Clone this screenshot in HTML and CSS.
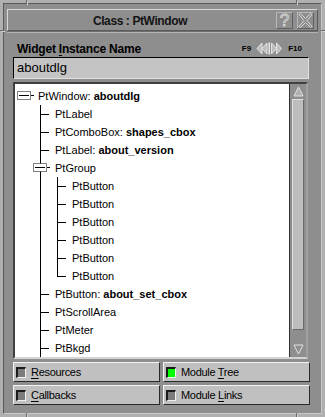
FILE: index.html
```html
<!DOCTYPE html>
<html>
  <head>
    <meta charset="utf-8">
    <title>Class : PtWindow</title>
    <link rel="stylesheet" href="styles.css">
  </head>
  <body>
    <div class="window">
      <span class="mark mark_top_l"></span>
      <span class="mark mark_top_r"></span>
      <span class="mark mark_side_l"></span>
      <span class="mark mark_side_r"></span>
      <span class="mark mark_bot_l"></span>
      <span class="mark mark_bot_r"></span>

      <div class="shell">
        <div class="titlebar">
          <div class="title">Class : PtWindow</div>
          <div class="tbtn">?</div>
          <div class="tbtn">
            <svg width="15" height="15" viewBox="0 0 15 15">
              <path d="M1 1.5 L2.5 0.5 L7.5 5.5 L12.5 0.5 L14 1.5 L9 7.5 L14 13.5 L12.5 14.5 L7.5 9.5 L2.5 14.5 L1 13.5 L6 7.5 Z" fill="none" stroke="#d6d6d6" stroke-width="1"/>
            </svg>
          </div>
        </div>

        <div class="pane">
          <div class="name_row">
            <h3>Widget <u>I</u>nstance Name</h3>
            <div class="nav">
              <span>F9</span>
              <svg width="27" height="13" viewBox="0 0 27 13">
                <path d="M1 6.5 L6 1 L6 12 Z M6 6.5 L11 1 L11 12 Z" fill="#bdbdbd" stroke="#e4e4e4" stroke-width="1"/>
                <rect x="12.5" y="0.5" width="1.5" height="12" fill="#e8e8e8"/>
                <path d="M15.5 1 L20.5 6.5 L15.5 12 Z M20.5 1 L25.5 6.5 L20.5 12 Z" fill="#bdbdbd" stroke="#e4e4e4" stroke-width="1"/>
              </svg>
              <span>F10</span>
            </div>
          </div>

          <div class="name_field">aboutdlg</div>

          <div class="tree_box">
            <div class="tree">
              <div class="node root">
                <span class="ico">
                  <svg width="21" height="18" viewBox="0 0 21 18">
                    <rect x="0.5" y="4.5" width="13" height="8" fill="#fff" stroke="#000" stroke-dasharray="1 1"/>
                    <rect x="2" y="8" width="10" height="1" fill="#000"/>
                    <rect x="14" y="8" width="3" height="1" fill="#000"/>
                  </svg>
                </span>
                <span class="txt">PtWindow: <b>aboutdlg</b></span>
              </div>
              <div class="node"><span class="tee"></span><span class="txt">PtLabel</span></div>
              <div class="node"><span class="tee"></span><span class="txt">PtComboBox: <b>shapes_cbox</b></span></div>
              <div class="node"><span class="tee"></span><span class="txt">PtLabel: <b>about_version</b></span></div>
              <div class="node">
                <span class="tee grp">
                  <svg width="23" height="18" viewBox="0 0 23 18">
                    <rect x="1.5" y="4.5" width="13" height="8" fill="#fff" stroke="#000" stroke-dasharray="1 1"/>
                    <rect x="3" y="8" width="10" height="1" fill="#000"/>
                    <rect x="15" y="8" width="3" height="1" fill="#000"/>
                  </svg>
                </span>
                <span class="txt">PtGroup</span>
              </div>
              <div class="node"><span class="rail"></span><span class="tee"></span><span class="txt">PtButton</span></div>
              <div class="node"><span class="rail"></span><span class="tee"></span><span class="txt">PtButton</span></div>
              <div class="node"><span class="rail"></span><span class="tee"></span><span class="txt">PtButton</span></div>
              <div class="node"><span class="rail"></span><span class="tee"></span><span class="txt">PtButton</span></div>
              <div class="node"><span class="rail"></span><span class="tee"></span><span class="txt">PtButton</span></div>
              <div class="node"><span class="rail"></span><span class="tee last"></span><span class="txt">PtButton</span></div>
              <div class="node"><span class="tee"></span><span class="txt">PtButton: <b>about_set_cbox</b></span></div>
              <div class="node"><span class="tee"></span><span class="txt">PtScrollArea</span></div>
              <div class="node"><span class="tee"></span><span class="txt">PtMeter</span></div>
              <div class="node"><span class="tee"></span><span class="txt">PtBkgd</span></div>
            </div>

            <div class="scrollbar">
              <div class="arrow">
                <svg width="11" height="11" viewBox="0 0 11 11"><path d="M5.5 1 L10 10 L1 10 Z" fill="#b0b0b0" stroke="#e2e2e2"/></svg>
              </div>
              <div class="thumb"></div>
              <div class="trough"></div>
              <div class="arrow">
                <svg width="11" height="11" viewBox="0 0 11 11"><path d="M1 1 L10 1 L5.5 10 Z" fill="#8e8e8e" stroke="#e2e2e2"/></svg>
              </div>
            </div>
          </div>

          <div class="toggles">
            <div class="toggle"><span class="led"></span><span><u>R</u>esources</span></div>
            <div class="toggle"><span class="led on"></span><span>Module <u>T</u>ree</span></div>
            <div class="toggle"><span class="led"></span><span><u>C</u>allbacks</span></div>
            <div class="toggle"><span class="led"></span><span>Module <u>L</u>inks</span></div>
          </div>
        </div>
      </div>
    </div>
  </body>
</html>
```

FILE: styles.css
```css
/* window colours */
:root {
  --face: #8e8e8e;
  --frame: #b0b0b0;
  --light: #d8d8d8;
  --dark: #5a5a5a;
  --button: #c0c0c0;
}

body {
  margin: 0;
  background-color: var(--face);
  font-family: "Liberation Sans", Arial, sans-serif;
  color: #000;
}

.window {
  position: relative;
  width: 325px;
  height: 417px;
  box-sizing: border-box;
  border: 3px solid var(--frame);
}

/* resize grips cut into the frame */
.mark {
  position: absolute;
  background-color: #6a6a6a;
  box-shadow: 1px 1px 0 #d0d0d0;
}
.mark_top_l { top: -3px; left: 23px; width: 1px; height: 4px; }
.mark_top_r { top: -3px; left: 293px; width: 1px; height: 4px; }
.mark_bot_l { bottom: -3px; left: 23px; width: 1px; height: 4px; }
.mark_bot_r { bottom: -3px; left: 293px; width: 1px; height: 4px; }
.mark_side_l { top: 27px; left: -3px; width: 4px; height: 1px; }
.mark_side_r { top: 27px; right: -3px; width: 4px; height: 1px; }

.shell {
  height: 100%;
  box-sizing: border-box;
  border: 1px solid var(--dark);
  border-right-color: #c8c8c8;
  border-bottom-color: #c8c8c8;
  padding: 5px 3px 3px;
  display: flex;
  flex-direction: column;
}

.titlebar {
  height: 22px;
  box-sizing: border-box;
  border: 1px solid var(--light);
  border-right-color: var(--dark);
  border-bottom-color: var(--dark);
  display: flex;
  align-items: center;
  padding-right: 3px;
}

.title {
  flex: 1;
  text-align: center;
  font-weight: bold;
  font-size: 12px;
  letter-spacing: -0.4px;
  color: #141414;
  padding-top: 1px;
}

.tbtn {
  width: 17px;
  height: 17px;
  box-sizing: border-box;
  margin-left: 4px;
  border: 1px solid #b8b8b8;
  border-right-color: #606060;
  border-bottom-color: #606060;
  display: flex;
  align-items: center;
  justify-content: center;
  font-size: 17px;
  line-height: 1;
  color: var(--face);
  -webkit-text-stroke: 0.8px #d6d6d6;
}

.pane {
  flex: 1;
  padding: 8px 8px 0 6px;
  display: flex;
  flex-direction: column;
  border-top: 1px solid #6e6e6e;
  box-shadow: inset 0 1px 0 #b4b4b4;
}

.name_row {
  height: 17px;
  display: flex;
  align-items: center;
  padding-left: 4px;
}

h3 {
  flex: 1;
  margin: 0;
  font-size: 12px;
  letter-spacing: -0.2px;
}

h3 u, .toggle u {
  text-underline-offset: 2px;
}

.nav {
  display: flex;
  align-items: center;
  gap: 5px;
  font-size: 8px;
  font-weight: bold;
  padding-right: 8px;
}

.name_field {
  height: 22px;
  box-sizing: border-box;
  margin-right: 1px;
  background-color: #c4c4c4;
  border: 1px solid #000;
  border-right-color: #e0e0e0;
  border-bottom-color: #e0e0e0;
  padding-left: 3px;
  font-size: 13px;
  line-height: 20px;
}

.tree_box {
  height: 277px;
  margin: 3px 2px 0 0;
  box-sizing: border-box;
  border: 2px solid #404040;
  border-right-color: #a0a0a0;
  border-bottom-color: #d4d4d4;
  display: flex;
  overflow: hidden;
}

.tree {
  flex: 1;
  background-color: #fff;
  padding: 3px 0 0 17px;
}

.node {
  height: 18px;
  display: flex;
  align-items: center;
  font-size: 11px;
  white-space: nowrap;
}

.node span {
  flex: none;
}

.root .ico {
  margin-left: -15px;
  width: 21px;
  height: 18px;
}

.tee {
  width: 23px;
  height: 18px;
  background:
    linear-gradient(#000, #000) 8px 0 / 1px 100% no-repeat,
    linear-gradient(#000, #000) 8px 9px / 9px 1px no-repeat;
}

.tee.last {
  background-size: 1px 10px, 9px 1px;
}

.tee.grp {
  background-size: 1px 100%, 0 0;
}

.rail {
  width: 17px;
  height: 18px;
  background: linear-gradient(#000, #000) 8px 0 / 1px 100% no-repeat;
}

.tree svg {
  display: block;
}

.scrollbar {
  width: 17px;
  border-left: 1px solid #303030;
  background-color: var(--face);
  display: flex;
  flex-direction: column;
  padding: 0 2px;
  box-sizing: border-box;
}

.arrow {
  height: 15px;
  display: flex;
  align-items: center;
  justify-content: center;
}

.thumb {
  height: 231px;
  background-color: #bdbdbd;
  border: 1px solid #e0e0e0;
  border-right-color: #6a6a6a;
  border-bottom-color: #6a6a6a;
  box-sizing: border-box;
}

.trough {
  flex: 1;
}

.toggles {
  display: grid;
  grid-template-columns: 1fr 1fr;
  gap: 3px;
  margin-top: 3px;
}

.toggle {
  height: 20px;
  box-sizing: border-box;
  background-color: var(--button);
  border: 1px solid #f4f4f4;
  border-right-color: #2a2a2a;
  border-bottom-color: #2a2a2a;
  display: flex;
  align-items: center;
  padding-left: 2px;
  gap: 5px;
  font-size: 11px;
  letter-spacing: -0.3px;
}

.led {
  width: 10px;
  height: 11px;
  box-sizing: border-box;
  background-color: #7c7c7c;
  border: 2px solid #1a1a1a;
  border-right: 1px solid #f0f0f0;
  border-bottom: 1px solid #f0f0f0;
}

.led.on {
  background-color: #00ff00;
}
```
